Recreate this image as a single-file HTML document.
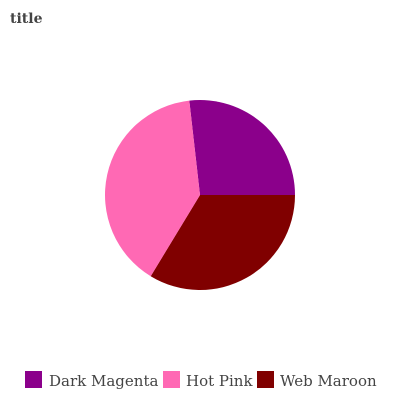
<!DOCTYPE html>
<html><head><style>
html,body{margin:0;padding:0;background:#fff;width:400px;height:400px;overflow:hidden}
</style></head><body>
<svg width="400" height="400" xmlns="http://www.w3.org/2000/svg">
<text x="10" y="23" font-family="DejaVu Serif, serif" font-weight="bold" font-size="14" fill="#444">title</text>
<path d="M200,195 L189.3,100.6 A95,95 0 0 1 295,195 Z" fill="#8b008b"/>
<path d="M200,195 L295,195 A95,95 0 0 1 150.7,276.2 Z" fill="#800000"/>
<path d="M200,195 L150.7,276.2 A95,95 0 0 1 189.3,100.6 Z" fill="#ff69b4"/>
<rect x="25" y="371" width="17" height="17" fill="#8b008b"/>
<rect x="163" y="371" width="17" height="17" fill="#ff69b4"/>
<rect x="257" y="371" width="17" height="17" fill="#800000"/>
<g font-family="DejaVu Serif, serif" font-size="15" fill="#444">
<text x="49" y="386">Dark Magenta</text>
<text x="186" y="386">Hot Pink</text>
<text x="280" y="386">Web Maroon</text>
</g>
</svg>
</body></html>
